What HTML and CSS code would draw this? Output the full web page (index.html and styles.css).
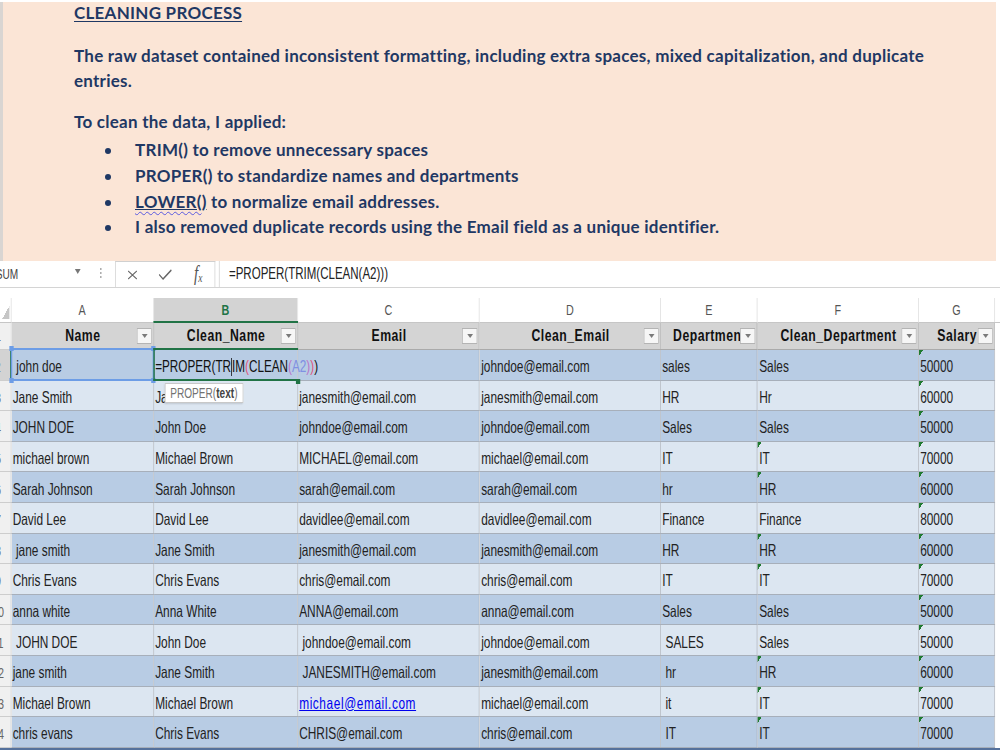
FILE: index.html
```
<!DOCTYPE html>
<html lang="en">
<head>
    <meta charset="UTF-8">
    <meta name="viewport" content="width=device-width, initial-scale=1.0">
    <title>Cleaning Process</title>
    <link rel="stylesheet" href="styles.css">
</head>
<body>
    <div class="note">
        <h2 class="note-title">CLEANING PROCESS</h2>
        <p>The raw dataset contained inconsistent formatting, including extra spaces, mixed capitalization, and duplicate entries.</p>
        <p>To clean the data, I applied:</p>
        <ul>
            <li>TRIM() to remove unnecessary spaces</li>
            <li>PROPER() to standardize names and departments</li>
            <li><span class="underline"><span class="spell">LOWER(</span>)</span> to normalize email addresses.</li>
            <li>I also removed duplicate records using the Email field as a unique identifier.</li>
        </ul>
    </div>

    <div class="sheet-wrap">
        <div class="sheet">
            <div class="formula-bar">
                <div class="name-box"><span>SUM</span><span class="name-caret"></span></div>
                <div class="fb-sep"><span></span></div>
                <div class="fb-buttons">
                    <span><svg width="14" height="10" viewBox="0 0 14 10"><path d="M1 1 L13 9 M13 1 L1 9" stroke="#666" stroke-width="1.4" fill="none"/></svg></span>
                    <span><svg width="19" height="11" viewBox="0 0 19 11"><path d="M1 5.5 L6.5 10 L18 1" stroke="#666" stroke-width="1.6" fill="none"/></svg></span>
                    <span class="fx"><i>f</i><sub>x</sub></span>
                </div>
                <div class="fb-input">=PROPER(TRIM(CLEAN(A2)))</div>
            </div>

            <table class="grid">
                <colgroup>
                    <col class="c-rh"><col class="c-a"><col class="c-b"><col class="c-c"><col class="c-d"><col class="c-e"><col class="c-f"><col class="c-g"><col class="c-h">
                </colgroup>
                <tr class="letters">
                    <th class="corner"></th><th>A</th><th class="on">B</th><th>C</th><th>D</th><th>E</th><th>F</th><th>G</th><th>H</th>
                </tr>
                <tr class="head">
                    <td class="rh">1</td>
                    <td>Name<span class="filter"></span></td>
                    <td>Clean_Name<span class="filter"></span></td>
                    <td>Email<span class="filter"></span></td>
                    <td>Clean_Email<span class="filter"></span></td>
                    <td>Department<span class="filter"></span></td>
                    <td>Clean_Department<span class="filter"></span></td>
                    <td>Salary<span class="filter"></span></td>
                    <td class="blank"></td>
                </tr>
                <tr class="dark">
                    <td class="rh active">2</td>
                    <td class="sel-cell"> john doe<span class="sel"><i class="tl"></i><i class="tr"></i><i class="bl"></i><i class="br"></i></span></td>
                    <td class="edit">=PROPER(TR<span class="cursor"></span>IM<span class="p1">(</span>CLEAN<span class="p2">(</span><span class="ref">A2</span><span class="p2">)</span><span class="p1">)</span>)<span class="tip">PROPER(<b>text</b>)</span></td>
                    <td></td>
                    <td>johndoe@email.com</td>
                    <td>sales</td>
                    <td>Sales</td>
                    <td class="t">50000</td>
                    <td class="blank"></td>
                </tr>
                <tr class="light">
                    <td class="rh">3</td><td>Jane Smith</td><td>Jane Smith</td><td>janesmith@email.com</td><td>janesmith@email.com</td><td>HR</td><td>Hr</td><td class="t">60000</td><td class="blank"></td>
                </tr>
                <tr class="dark">
                    <td class="rh">4</td><td>JOHN DOE</td><td>John Doe</td><td>johndoe@email.com</td><td>johndoe@email.com</td><td>Sales</td><td>Sales</td><td class="t">50000</td><td class="blank"></td>
                </tr>
                <tr class="light">
                    <td class="rh">5</td><td>michael brown</td><td>Michael Brown</td><td>MICHAEL@email.com</td><td>michael@email.com</td><td>IT</td><td class="t">IT</td><td class="t">70000</td><td class="blank"></td>
                </tr>
                <tr class="dark">
                    <td class="rh">6</td><td>Sarah Johnson</td><td>Sarah Johnson</td><td>sarah@email.com</td><td>sarah@email.com</td><td>hr</td><td class="t">HR</td><td class="t">60000</td><td class="blank"></td>
                </tr>
                <tr class="light">
                    <td class="rh">7</td><td>David Lee</td><td>David Lee</td><td>davidlee@email.com</td><td>davidlee@email.com</td><td>Finance</td><td>Finance</td><td class="t">80000</td><td class="blank"></td>
                </tr>
                <tr class="dark">
                    <td class="rh">8</td><td> jane smith</td><td>Jane Smith</td><td>janesmith@email.com</td><td>janesmith@email.com</td><td>HR</td><td class="t">HR</td><td class="t">60000</td><td class="blank"></td>
                </tr>
                <tr class="light">
                    <td class="rh">9</td><td>Chris Evans</td><td>Chris Evans</td><td>chris@email.com</td><td>chris@email.com</td><td>IT</td><td class="t">IT</td><td class="t">70000</td><td class="blank"></td>
                </tr>
                <tr class="dark">
                    <td class="rh">10</td><td>anna white</td><td>Anna White</td><td>ANNA@email.com</td><td>anna@email.com</td><td>Sales</td><td>Sales</td><td class="t">50000</td><td class="blank"></td>
                </tr>
                <tr class="light">
                    <td class="rh">11</td><td> JOHN DOE</td><td>John Doe</td><td> johndoe@email.com</td><td>johndoe@email.com</td><td> SALES</td><td>Sales</td><td class="t">50000</td><td class="blank"></td>
                </tr>
                <tr class="dark">
                    <td class="rh">12</td><td>jane smith</td><td>Jane Smith</td><td> JANESMITH@email.com</td><td>janesmith@email.com</td><td> hr</td><td class="t">HR</td><td class="t">60000</td><td class="blank"></td>
                </tr>
                <tr class="light">
                    <td class="rh">13</td><td>Michael Brown</td><td>Michael Brown</td><td><span class="link">michael@email.com</span></td><td>michael@email.com</td><td> it</td><td class="t">IT</td><td class="t">70000</td><td class="blank"></td>
                </tr>
                <tr class="dark">
                    <td class="rh">14</td><td>chris evans</td><td>Chris Evans</td><td>CHRIS@email.com</td><td>chris@email.com</td><td> IT</td><td class="t">IT</td><td class="t">70000</td><td class="blank"></td>
                </tr>
            </table>
            <div class="sheet-end"></div>
        </div>
    </div>
</body>
</html>
```

FILE: styles.css
```
html, body {
    margin: 0;
    padding: 0;
    overflow: hidden;
}
body {
    width: 1000px;
    height: 750px;
    background-color: #fff;
    font-family: "Liberation Sans", Arial, sans-serif;
}

/* Note box */
.note {
    height: 259px;
    box-sizing: border-box;
    margin: 2px 4px 0 0;
    padding: 0 30px 0 71px;
    border-left: 3px solid #d9d5d2;
    background-color: #fbe5d6;
    color: #1f3864;
    font-family: "Lato", sans-serif;
    font-weight: 700;
    font-size: 17px;
    letter-spacing: 0.25px;
}
.note-title {
    margin: 0;
    font-size: 17px;
    line-height: 21px;
    text-decoration: underline;
    text-underline-offset: 2px;
}
.note p {
    margin: 20px 0 0;
    line-height: 25px;
}
.note p + p {
    margin-top: 16px;
}
.note ul {
    list-style: none;
    margin: 3px 0 0;
    padding: 0 0 0 31px;
    line-height: 25.8px;
}
.note li::before {
    content: "";
    display: inline-block;
    width: 6px;
    height: 6px;
    border-radius: 50%;
    background-color: currentColor;
    margin-right: 24px;
    vertical-align: 2px;
}
.underline {
    text-decoration: underline;
}
.spell {
    text-decoration: underline wavy #5a5ae0;
    text-decoration-thickness: 1px;
    text-underline-offset: 3px;
}

/* Spreadsheet */
.sheet-wrap {
    height: 489px;
    overflow: hidden;
}
.sheet {
    width: 1450px;
    transform: scaleX(0.72);
    transform-origin: 0 0;
}
.formula-bar {
    display: flex;
    height: 26px;
    margin-bottom: 10px;
    border-bottom: 1px solid #d4d4d4;
    font-size: 16px;
    color: #222;
}
.name-box {
    width: 133px;
    margin-left: -8px;
    padding: 0 13px 0 2px;
    box-sizing: border-box;
    display: flex;
    align-items: center;
    justify-content: space-between;
    font-size: 14px;
    color: #444;
}
.name-caret {
    width: 0;
    height: 0;
    border-left: 4px solid transparent;
    border-right: 4px solid transparent;
    border-top: 5px solid #777;
    margin-top: -6px;
}
.fb-sep {
    width: 30px;
    display: flex;
    align-items: center;
    justify-content: center;
}
.fb-sep span {
    height: 10px;
    border-left: 2px dotted #a8a8a8;
    margin-top: -3px;
}
.fb-buttons {
    width: 139px;
    margin-left: 5px;
    display: flex;
    border: 1px solid #d0d0d0;
    border-bottom: none;
    box-sizing: border-box;
}
.fb-buttons span {
    flex: 1;
    display: flex;
    align-items: center;
    justify-content: center;
}
.fx {
    font-family: "Liberation Serif", serif;
    font-size: 21px;
    color: #555;
}
.fx i {
    margin-top: -3px;
}
.fx sub {
    font-size: 13px;
    font-style: italic;
    margin-top: 6px;
}
.fb-input {
    flex: 1;
    margin-left: 5px;
    padding-left: 13px;
    border-left: 1px solid #d0d0d0;
    display: flex;
    align-items: center;
}

.grid {
    table-layout: fixed;
    border-collapse: collapse;
    margin-left: -21.4px;
    width: 1442px;
    font-size: 16.5px;
    color: #222;
}
.c-rh { width: 36px; }
.c-a { width: 197.9px; }
.c-b { width: 200px; }
.c-c { width: 252.8px; }
.c-d { width: 251.4px; }
.c-e { width: 134.7px; }
.c-f { width: 223.6px; }
.c-g { width: 106px; }
.c-h { width: 40px; }

.grid td, .grid th {
    padding: 0 0 0 2px;
    white-space: pre;
    overflow: hidden;
    text-align: left;
}

.letters {
    height: 24px;
}
.letters th {
    text-align: center;
    font-weight: normal;
    font-size: 15px;
    color: #555;
    padding: 0;
    border-left: 1px solid #dcdcdc;
    border-bottom: 1px solid #c6c6c6;
}
.letters th.on {
    background-color: #d3d3d3;
    color: #217346;
    font-weight: bold;
    border-bottom: 2px solid #217346;
}
.letters th.corner {
    border-left: none;
    background: linear-gradient(to top left, #c6c6c6 50%, transparent 50%) right 2px bottom 3px / 10px 13px no-repeat;
}

.head {
    height: 27.5px;
    background-color: #d4d4d4;
}
.head td {
    position: relative;
    text-align: center;
    font-weight: bold;
    font-size: 17px;
    letter-spacing: 0.7px;
    color: #111;
    border: 1px solid #aaa;
}
.filter {
    position: absolute;
    right: 2px;
    top: 5px;
    width: 21px;
    height: 16px;
    box-sizing: border-box;
    border: 1px solid #b4b4b4;
    background-color: #f6f6f6;
}
.filter::after {
    content: "";
    position: absolute;
    left: 6px;
    top: 5px;
    border-left: 4px solid transparent;
    border-right: 4px solid transparent;
    border-top: 4px solid #7a7a7a;
}

.dark, .light {
    height: 30.6px;
}
.dark {
    background-color: #b8cce4;
}
.light {
    background-color: #dce6f1;
}
.dark td, .light td {
    padding-top: 4px;
    border: 1px solid #a7afba;
}
.grid td.rh {
    text-align: center;
    padding: 4px 0 0;
    font-size: 15px;
    font-weight: normal;
    letter-spacing: 0;
    color: #666;
    background-color: #f0f0f0;
    border: 1px solid #cdcdcd;
}
.head td.rh {
    padding-top: 0;
}
.grid td.rh.active {
    background-color: #d3d3d3;
    border-right: 2px solid #217346;
}
.grid td.blank {
    background-color: #fff;
    border: none;
}
.t {
    background: linear-gradient(to bottom right, #1f7a30 50%, transparent 50%) 0 0 / 6px 6px no-repeat;
}
.link {
    color: #0000ee;
    text-decoration: underline;
    letter-spacing: 0.8px;
}

/* Active cells */
.sel-cell {
    position: relative;
    overflow: visible !important;
}
.sel {
    position: absolute;
    top: -2px;
    left: -1px;
    right: -1px;
    bottom: -1px;
    border: 2px solid #6d9de6;
}
.sel i {
    position: absolute;
    width: 6px;
    height: 5px;
    background-color: #6d9de6;
}
.sel .tl { left: -4px; top: -4px; }
.sel .tr { right: -4px; top: -4px; }
.sel .bl { left: -4px; bottom: -4px; }
.sel .br { right: -4px; bottom: -4px; }

.edit {
    position: relative;
    z-index: 2;
    overflow: visible !important;
    font-size: 16.3px;
    color: #111;
}
.edit::before {
    content: "";
    position: absolute;
    top: -2px;
    left: -1px;
    right: -1px;
    bottom: -1px;
    border: 2px solid #217346;
    border-right: none;
}
.edit::after {
    content: "";
    position: absolute;
    right: -4px;
    bottom: -4px;
    width: 6px;
    height: 5px;
    background-color: #217346;
}
.cursor {
    display: inline-block;
    width: 1.4px;
    height: 18px;
    background-color: #000;
    vertical-align: -4px;
}
.p1 { color: #e0557c; }
.p2 { color: #b874c8; }
.ref { color: #8090e2; }
.tip {
    position: absolute;
    left: 15px;
    top: calc(100% + 3px);
    padding: 1px 7px;
    background-color: #fff;
    border: 1px solid #c8c8c8;
    box-shadow: 0 1px 2px rgba(0, 0, 0, 0.15);
    font-size: 14px;
    color: #727272;
    line-height: 16px;
}
.tip b {
    color: #444;
}
.sheet-end {
    height: 3px;
    background-color: #55719c;
}
```
